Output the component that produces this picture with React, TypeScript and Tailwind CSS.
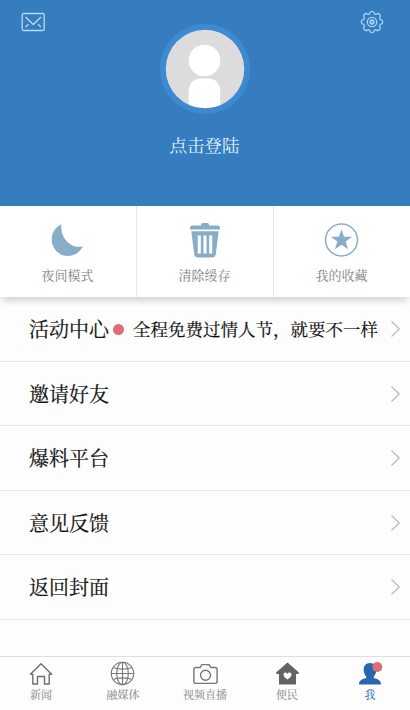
import type { ReactNode } from "react";
import clsx from "clsx";

const quickActions = [
  { label: "夜间模式", icon: <MoonIcon /> },
  { label: "清除缓存", icon: <TrashIcon /> },
  { label: "我的收藏", icon: <StarIcon /> },
];

const menu: { label: string; promo?: string }[] = [
  { label: "活动中心", promo: "全程免费过情人节，就要不一样" },
  { label: "邀请好友" },
  { label: "爆料平台" },
  { label: "意见反馈" },
  { label: "返回封面" },
];

const tabs: { label: string; icon: ReactNode; active?: boolean }[] = [
  { label: "新闻", icon: <HomeIcon /> },
  { label: "融媒体", icon: <GlobeIcon /> },
  { label: "视频直播", icon: <CameraIcon /> },
  { label: "便民", icon: <HeartHouseIcon /> },
  { label: "我", icon: <UserIcon />, active: true },
];

export default function App() {
  return (
    <div className="flex h-[710px] w-[410px] flex-col overflow-hidden bg-[#fdfdfd] font-['Noto_Serif_CJK_SC','Noto_Serif_SC','Noto_Sans_CJK_SC',serif]">
      <Header />
      <section className="z-10 grid h-[91px] shrink-0 grid-cols-[136px_137px_1fr] bg-white shadow-[0_5px_8px_-2px_rgba(0,0,0,0.2)]">
        {quickActions.map((a, i) => (
          <button
            key={a.label}
            className={clsx(
              "flex flex-col items-center pr-px pt-4",
              i > 0 && "border-l border-[#e6e6e6]",
            )}
          >
            {a.icon}
            <span className="mt-[7px] text-[13px] leading-5 text-[#808080]">{a.label}</span>
          </button>
        ))}
      </section>
      <ul className="flex-1">
        {menu.map((m) => (
          <MenuRow key={m.label} {...m} />
        ))}
      </ul>
      <nav className="grid h-[54px] shrink-0 grid-cols-5 border-t border-[#dedede] bg-[#fdfdfd]">
        {tabs.map((t) => (
          <button key={t.label} className="flex flex-col items-center pt-[3px]">
            {t.icon}
            <span
              className={clsx(
                "text-[11px] leading-4",
                t.active ? "pl-0.5 text-[#2865b3]" : "text-[#808080]",
              )}
            >
              {t.label}
            </span>
          </button>
        ))}
      </nav>
    </div>
  );
}

function Header() {
  return (
    <header className="flex h-[206px] shrink-0 items-start justify-between bg-[#367dc0] pl-[21px] pr-[26px]">
      <svg className="mt-[11px]" width="24" height="22" viewBox="0 0 24 22" fill="none" stroke="#b4daf7" strokeWidth="1.3">
        <rect x="1.2" y="2.5" width="22" height="17" rx="1.6" />
        <path d="M4.5 6 12.3 13.5 20 6M4.5 16l3-2.8M20 16l-3-2.8" />
      </svg>
      <div className="ml-1 flex flex-col items-center pt-6">
        <svg width="90" height="90" viewBox="0 0 90 90">
          <clipPath id="avatar">
            <circle cx="45" cy="45" r="39.3" />
          </clipPath>
          <circle cx="45" cy="45" r="45" fill="#3d8ad0" />
          <g clipPath="url(#avatar)">
            <rect width="90" height="90" fill="#dcdcdc" />
            <circle cx="44.500" cy="36.500" r="15.800" fill="#fff" />
            <path d="M28.700 90V69q0-14.600 13-14.600h5.600q13 0 13 14.600v21z" fill="#fff" />
          </g>
        </svg>
        <span className="mt-[19px] text-[17.5px] leading-6 text-[#e3f4ff]">点击登陆</span>
      </div>
      <svg className="mt-[10px]" width="24" height="24" viewBox="0 0 24 24" fill="none" stroke="#a9d3f5" strokeWidth="1.3" strokeLinejoin="round">
        <path d="M9.8 3.2Q10.2 1.3 12 1.3t2.2 1.9l.5.8 1.1.3.9-.4q1.7-1 2.9.4t.4 2.9l-.4.9.4 1.1.8.5q1.9.4 1.9 2.3t-1.9 2.2l-.8.6-.4 1.1.4.9q.8 1.5-.4 2.9t-2.9.4l-.9-.4-1.1.4-.5.8q-.4 1.8-2.2 1.8t-2.2-1.8l-.5-.8-1.1-.4-.9.4q-1.7 1-2.9-.4t-.4-2.9l.4-.9-.4-1.1-.8-.6Q1.3 13.8 1.3 12t1.9-2.3l.8-.5.4-1.1-.4-.9q-.8-1.5.4-2.9t2.9-.4l.9.4 1.1-.3z" />
        <circle cx="12" cy="12" r="4.7" />
        <circle cx="12" cy="12" r="2" fill="#a9d3f5" fillOpacity="0.5" />
      </svg>
    </header>
  );
}

function MenuRow({ label, promo }: { label: string; promo?: string }) {
  return (
    <li className="flex h-[64.5px] items-center border-b border-[#e8e8e8] pl-[29px] pr-[9px] pt-px text-[#111] [-webkit-text-stroke:0.2px_#111]">
      <span className="text-[20px] leading-7">{label}</span>
      {promo && (
        <>
          <span className="ml-1 size-[11px] rounded-full bg-[#dc6d77]" />
          <span className="ml-[9px] whitespace-nowrap text-[17.5px] leading-7">{promo}</span>
        </>
      )}
      <svg className="ml-auto shrink-0" width="11" height="18" viewBox="0 0 11 18" fill="none" stroke="#bdbdbd" strokeWidth="1.3">
        <path d="M1.5 1.5 9.3 9l-7.8 7.5" />
      </svg>
    </li>
  );
}

function MoonIcon() {
  return (
    <svg width="36" height="36" viewBox="0 0 36 36" fill="#88adc9">
      <path d="M11.3 2.500C5.500 5 1.700 10.300 1.700 17.300 1.700 26.600 8.500 34 17.600 34c6.600 0 12.400-3.600 15.400-10-3.500 1.300-7.300 1.200-11-.8C14.500 19.300 10.700 11.500 11.300 2.500z" />
    </svg>
  );
}

function TrashIcon() {
  return (
    <svg width="36" height="36" viewBox="0 0 36 36" fill="#88adc9">
      <path d="M14 3.5V2.8Q14 1 15.8 1h4.400Q22 1 22 2.800v.7h8.500q2.500 0 2.500 2.500v1.600H3V6q0-2.500 2.500-2.500z" />
      <path d="M4.300 9.300h27.400l-2.900 22.500q-.4 3.700-4 3.700H11.200q-3.600 0-4-3.700z" />
      <path d="M12.300 13.500v18M18 13.500v18M23.700 13.500v18" stroke="#fff" strokeWidth="3" />
    </svg>
  );
}

function StarIcon() {
  return (
    <svg width="36" height="36" viewBox="0 0 36 36" fill="#88adc9">
      <circle cx="17.500" cy="18" r="16" fill="none" stroke="#88adc9" strokeWidth="1.5" />
      <path d="m17.500 7.200 2.600 7.600h8l-6.400 4.800 2.400 7.700-6.600-4.600-6.600 4.600 2.400-7.700-6.400-4.800h8z" />
    </svg>
  );
}

function HomeIcon() {
  return (
    <svg width="26" height="26" viewBox="0 0 26 26" fill="none" stroke="#707070" strokeWidth="1.4" strokeLinejoin="round">
      <path d="M2.400 14.200 13 3.700l10.600 10.500h-2.400V24h-4.700v-7.500h-7V24H4.800v-9.800z" />
    </svg>
  );
}

function GlobeIcon() {
  return (
    <svg width="26" height="26" viewBox="0 0 26 26" fill="none" stroke="#777" strokeWidth="1.1">
      <circle cx="12.5" cy="13.5" r="11.2" />
      <ellipse cx="12.5" cy="13.5" rx="5.8" ry="11.2" />
      <path d="M12.5 2.3v22.4M1.3 13.5h22.400M3.500 7.800q9 2.700 18 0M3.500 19.200q9-2.700 18 0" />
    </svg>
  );
}

function CameraIcon() {
  return (
    <svg width="26" height="26" viewBox="0 0 26 26" fill="none" stroke="#777" strokeWidth="1.4" strokeLinejoin="round">
      <path d="M3.700 7.500h4.600l1.500-2.900h7.400l1.500 2.900h4.600q1.800 0 1.800 1.800v12.300q0 1.800-1.800 1.800H3.700q-1.800 0-1.800-1.800V9.300q0-1.800 1.800-1.800z" />
      <circle cx="13.5" cy="15.3" r="5" />
    </svg>
  );
}

function HeartHouseIcon() {
  return (
    <svg width="26" height="26" viewBox="0 0 26 26">
      <path d="M13.500 2.500 25.200 12.700 24 14h-2v10.500H5V14H3l-1.200-1.300z" fill="#636363" />
      <path d="M13.500 19.500c-2.500-1.700-4-3-4-4.700 0-2.500 3-3 4-.9 1-2.100 4-1.600 4 .9 0 1.700-1.500 3-4 4.700z" fill="#fff" />
    </svg>
  );
}

function UserIcon() {
  return (
    <svg className="overflow-visible" width="26" height="26" viewBox="0 0 26 26">
      <path d="M14 3c-4.100 0-6.300 2.800-6.300 6.700 0 2.700 1 5.200 2.500 6.700v1.500c-3.500 1.200-7.200 1.600-7.200 6.600h22c0-5-3.700-5.400-7.200-6.600v-1.500c1.500-1.500 2.500-4 2.500-6.700C20.300 5.800 18.100 3 14 3z" fill="#2865b3" />
      <circle cx="21.3" cy="7" r="5" fill="#dc6d77" />
    </svg>
  );
}
